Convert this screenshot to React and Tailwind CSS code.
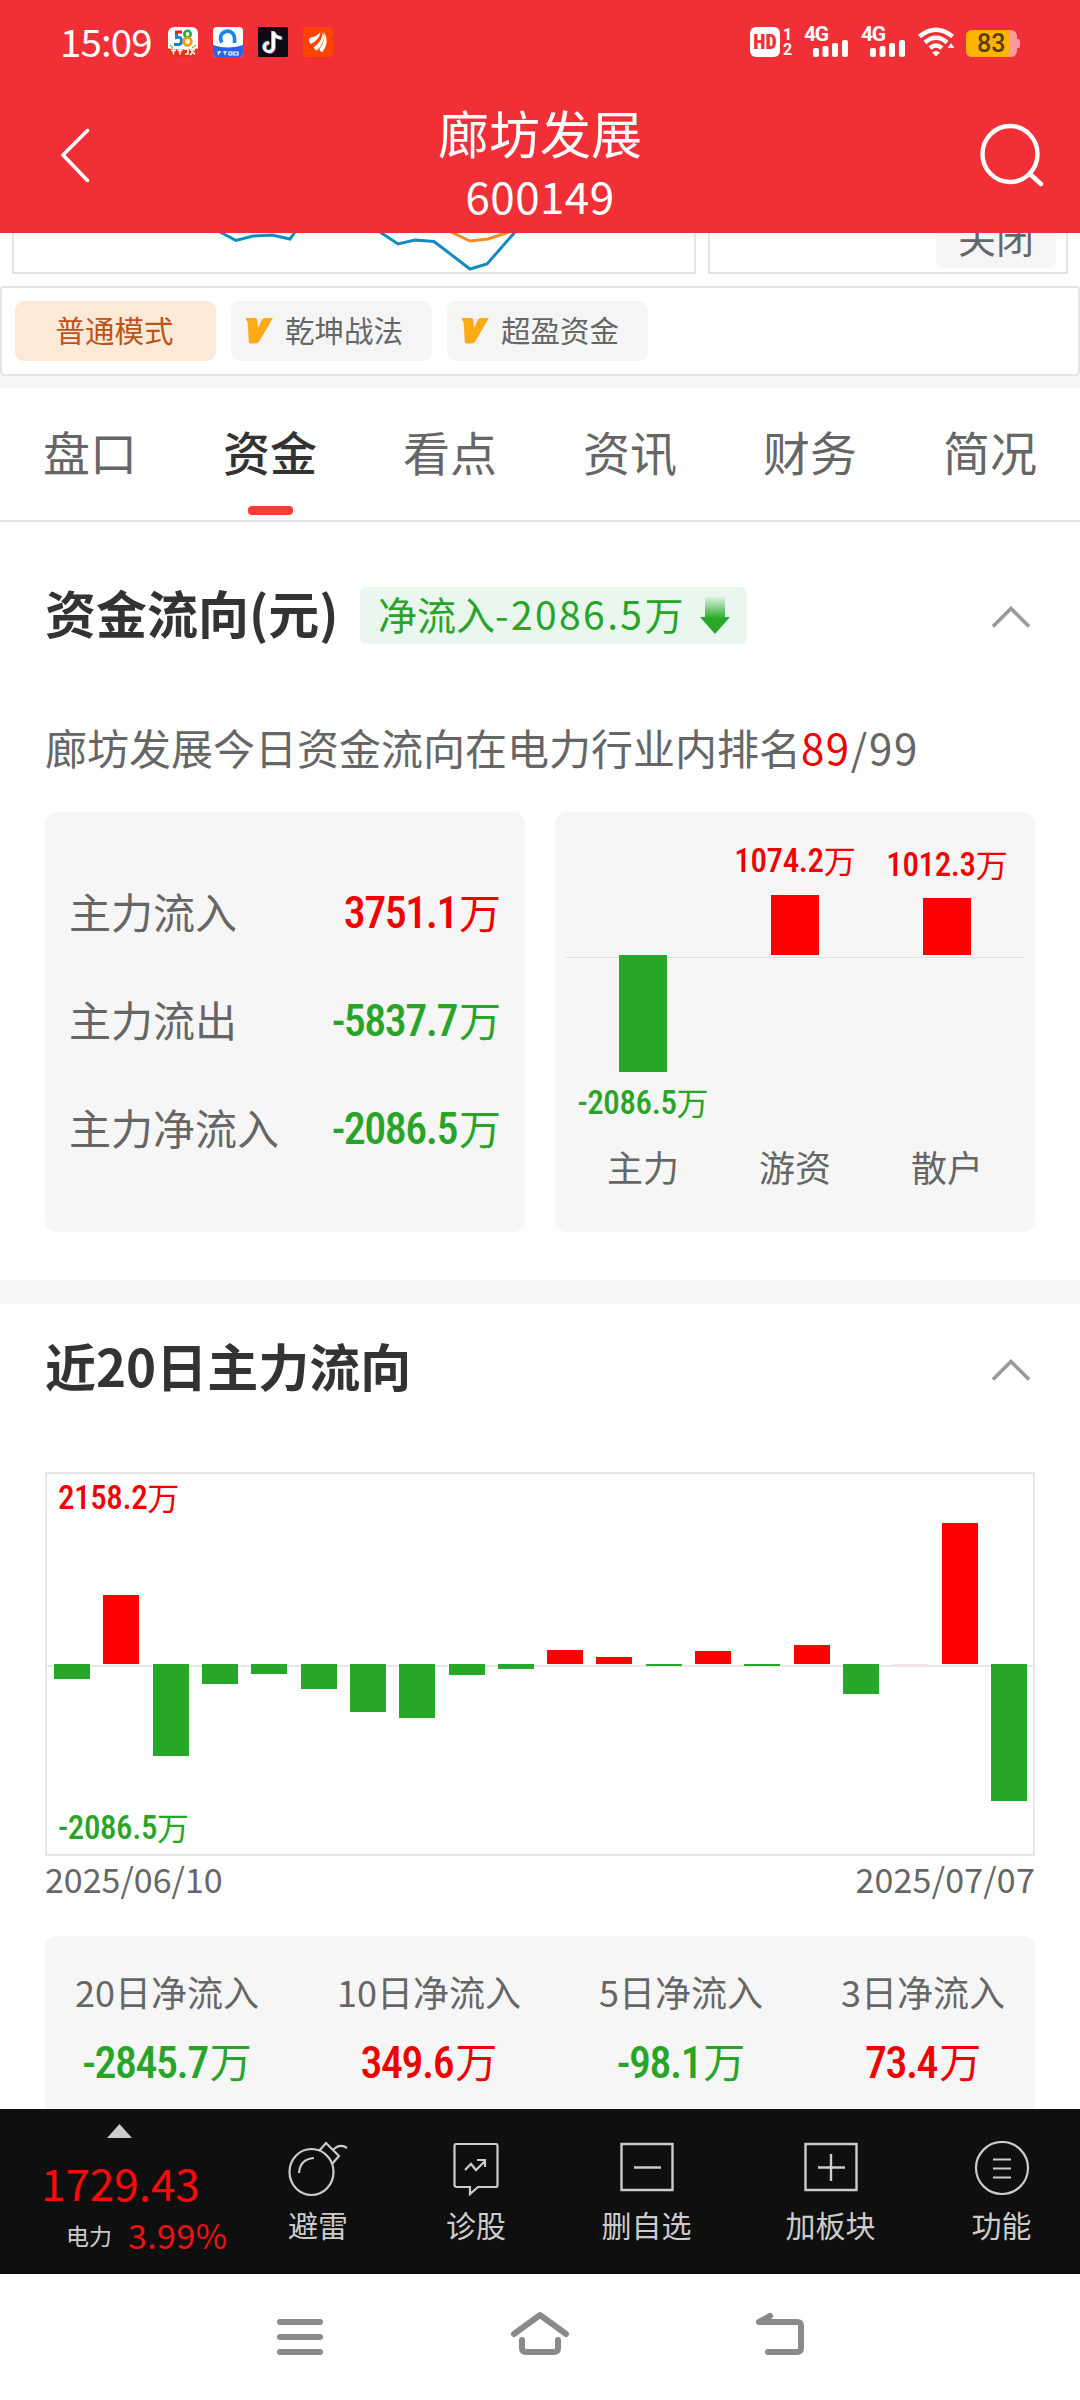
import React from 'react';

const RED = 'text-[#f00000]';
const GREEN = 'text-[#28a428]';

const tabs = ['盘口', '资金', '看点', '资讯', '财务', '简况'];

const flowRows = [
  { label: '主力流入', value: '3751.1', color: RED },
  { label: '主力流出', value: '-5837.7', color: GREEN },
  { label: '主力净流入', value: '-2086.5', color: GREEN }
];

// signed bar heights in px, oldest first
const dailyBars = [
  -14.5, 69.5, -92, -19.5, -10, -25, -47.5, -53.5, -11, -5,
  14, 7, -1.5, 13, -1.5, 19, -30, 0.5, 141.5, -136.5
];

const summary = [
  { label: '20日净流入', value: '-2845.7', color: GREEN },
  { label: '10日净流入', value: '349.6', color: RED },
  { label: '5日净流入', value: '-98.1', color: GREEN },
  { label: '3日净流入', value: '73.4', color: RED }
];

const Amount = ({ value, large, className }) => (
  <span className={`inline-flex items-center whitespace-nowrap ${className}`}>
    <span
      className={`font-['Roboto_Condensed',Roboto,sans-serif] font-medium [font-stretch:75%] ${
        large ? 'text-[44px] tracking-[-1.5px]' : 'text-[33px] tracking-[-0.4px]'
      }`}
    >
      {value}
    </span>
    <span className={large ? 'pb-[5px] pl-[2px]' : 'pb-[4px]'}>万</span>
  </span>
);

const Chevron = () => (
  <svg width="40" height="22" viewBox="0 0 40 22" fill="none" stroke="#999" strokeWidth="3.6">
    <path d="M2 20.500 20 2.500 38 20.500" />
  </svg>
);

const VipMark = () => (
  <svg width="27" height="26" viewBox="0 0 27 26" fill="#ffab17">
    <path d="M0 0h9q2 0 2.200 2l.8 8 4-8.500Q17 0 19 0h8L13.500 23q-1.500 2.500-4 2.500H5q-2 0-2.200-2L1.800 6Q1.700 3 0 2z" />
  </svg>
);

const Signal = () => (
  <div className="relative h-[30px] w-11">
    <span className="absolute left-0 top-[-4px] text-[21px] leading-[22px] font-bold tracking-[-1.200px] font-['Roboto',sans-serif]">4G</span>
    <svg className="absolute bottom-0 left-[9px]" width="35" height="17" viewBox="0 0 35 17" fill="#fff">
      <rect x="0" y="8" width="6" height="9" rx="2" />
      <rect x="9.500" y="6" width="6" height="11" rx="2" />
      <rect x="19" y="3" width="6" height="14" rx="2" />
      <rect x="29" y="0" width="6" height="17" rx="2" />
    </svg>
  </div>
);

const StatusBar = () => (
  <div className="flex h-[84px] items-center pl-[60px] pr-[60px]">
    <span className="w-[93px] whitespace-nowrap pb-[3px] text-[38.500px] leading-none tracking-[-0.900px]">15:09</span>
    <div className="ml-[15px] flex gap-[15px]">
      <svg width="30" height="30" viewBox="0 0 30 30">
        <rect width="30" height="30" rx="6" fill="#fff" />
        <path d="M0 21.500q15 2 30 0V24q0 6-6 6H6q-6 0-6-6z" fill="#e2331a" />
        <path d="M2 18l3 3M28 18l-4 3" stroke="#8cc63f" strokeWidth="1.500" />
        <path d="M8.500 6v4.500q5-1 5 3t-3 4H6" fill="none" stroke="#1b7fd0" strokeWidth="3" />
        <path d="M14 5H7" stroke="#e2231a" strokeWidth="3" />
        <circle cx="19.500" cy="7" r="3.200" fill="none" stroke="#1faf3c" strokeWidth="2.600" />
        <circle cx="19.500" cy="14.500" r="3.800" fill="none" stroke="#f39a1b" strokeWidth="2.800" />
        <path d="M3 23.500h5M5.500 21.500v6M9.500 23.500h5M12 21.500v6M16 22h4v5h-3M22 23h5M24 22v4l-2 2M25 25l2 2.500" fill="none" stroke="#fff" strokeWidth="1.500" />
      </svg>
      <svg width="30" height="30" viewBox="0 0 30 30">
        <rect width="30" height="30" rx="4" fill="#fff" />
        <path d="M0 18q15 5 30 0v8q0 4-4 4H4q-4 0-4-4z" fill="#2b62e8" />
        <path d="M9 15.500A7 7 0 1 1 21.500 10.500v5.500" fill="none" stroke="#1c84ee" strokeWidth="3.600" />
        <path d="M4 25h4M7 24l-2 4M10 25h4M12 24v4M16 25h3v3h-3zM21 25h4v3h-4z" stroke="#fff" strokeWidth="1.200" fill="none" />
      </svg>
      <svg width="30" height="30" viewBox="0 0 30 30" fill="none">
        <rect width="30" height="30" rx="1.500" fill="#0b0b16" />
        <path d="M14.500 4v16a4.500 4.500 0 1 1-4.500-4.800M14.500 5q1.500 5 8 5.500" stroke="#25e6e2" strokeWidth="3" />
        <path d="M16.500 5v16a4.500 4.500 0 1 1-4.500-4.800M16.500 6q1.500 5 8 5.500" stroke="#f4355a" strokeWidth="3" />
        <path d="M15.500 4.500v16a4.500 4.500 0 1 1-4.500-4.800M15.500 5.500q1.500 5 8 5.500" stroke="#fff" strokeWidth="3" />
      </svg>
      <svg width="30" height="30" viewBox="0 0 30 30" fill="#fff">
        <rect width="30" height="30" rx="3" fill="#ff4400" />
        <path d="M6 13q0-2 2-2.500 6-1 9.500-5.500-1 8-10 12-1.500-1.500-1.500-4z" />
        <path d="M10.500 20.500q8.500-6 9.500-15.500 3.500 9-6 18.500-2.500-.5-3.500-3z" />
        <path d="M16.500 22q6-7.500 4.500-17 6 10-1.500 20-2.500 0-3-3z" />
      </svg>
    </div>

    <div className="ml-auto flex h-[30px] items-end text-white">
      <div className="flex h-[30px] w-[30px] items-center justify-center rounded-[6px] bg-white text-[20px] font-black text-[#f12f37] font-['Roboto_Condensed',Roboto,sans-serif] [font-stretch:75%]">HD</div>
      <div className="ml-[3px] flex h-[30px] w-[9px] flex-col items-center justify-between text-[16px] leading-[15px] font-bold font-['Roboto',sans-serif]">
        <span>1</span>
        <span>2</span>
      </div>
      <div className="ml-[12px]"><Signal /></div>
      <div className="ml-[13px]"><Signal /></div>
      <svg className="ml-[13px]" width="37" height="30" viewBox="0 0 37 30" fill="none" stroke="#fff" strokeWidth="4.400">
        <path d="M1.500 9.500Q18 -4 34.500 9.500" />
        <path d="M7 15.500Q18 6 29 15.500" />
        <path d="M12 21Q18 16 24 21" />
        <path d="M14 25.500q4-3 8 0L18 29.500z" fill="#fff" stroke="none" />
        <path d="M33 16l3.500 5h-7z" fill="#fff" stroke="none" />
      </svg>
      <div className="relative ml-[11px] flex h-[27px] w-[54px] items-center">
        <div className="flex h-[27px] w-[51px] overflow-hidden rounded-[6px] bg-[#fb9aa0]">
          <div className="h-full w-[43px] bg-[#ffb400]" />
        </div>
        <div className="h-[9px] w-[3px] rounded-r-[2px] bg-[#fb9aa0]" />
        <span className="absolute left-[11px] top-0 text-[25px] leading-[28px] font-medium text-[#5a3c00] font-['Roboto',sans-serif]">83</span>
      </div>
    </div>
  </div>
);

const Header = () => (
  <div className="h-[233px] shrink-0 bg-[#f12f37] text-white">
    <StatusBar />
    <div className="flex h-[149px] items-start justify-between pl-[60px] pr-[36px]">
      <svg className="mt-[44px]" width="30" height="54" viewBox="0 0 30 54" fill="none" stroke="#fff" strokeWidth="3.600" strokeLinecap="round" strokeLinejoin="round">
        <path d="M27.500 2.500 3 27l24.500 25.500" />
      </svg>
      <div className="ml-[10px] mt-[18px] flex flex-col items-center">
        <div className="text-[51px] leading-[60px]">廊坊发展</div>
        <div className="mt-[3px] text-[44px] leading-[60px] tracking-[0.400px]">600149</div>
      </div>
      <svg className="mt-[39px]" width="64" height="64" viewBox="0 0 64 64" fill="none" stroke="#fff" strokeWidth="4.400" strokeLinecap="round">
        <ellipse cx="30" cy="31" rx="27.500" ry="28" />
        <path d="m50 51 11 10" />
      </svg>
    </div>
  </div>
);

const ChartStrip = () => (
  <div className="flex h-[53px] items-start gap-[12px] px-[12px]">
    <div className="h-[41px] w-[684px] border-x-2 border-b-2 border-[#e4e4e4]">
      <svg width="680" height="39" viewBox="14 233 680 39" fill="none" strokeWidth="3">
        <path d="M220 232l16 8.500 17-4.500 19-1 18 4 5-7M380 232l18 12 17-4 19 1.500 36 27.500 17-5 28-32" stroke="#148ac0" />
        <path d="M451 232l19 9 18-2 21-7" stroke="#f58a1f" />
      </svg>
    </div>
    <div className="flex h-[41px] w-[360px] justify-end overflow-hidden border-x-2 border-b-2 border-[#e4e4e4] pr-[10px]">
      <div className="h-[35px] w-[120px] overflow-hidden rounded-b-[8px] bg-[#f5f5f5] text-center text-[#666]">
        <div className="mt-[-22px] text-[38px] leading-[52px]">关闭</div>
      </div>
    </div>
  </div>
);

const ModeBar = () => (
  <div className="flex h-[90px] items-center gap-[15px] rounded-[4px] border-2 border-[#e4e4e4] px-[13px] text-[29.500px] text-[#666]">
    <div className="flex h-[60px] w-[201px] items-center justify-center rounded-[9px] bg-[#fce9d8] pr-[2px] pb-[3px] text-[#bd5318]">普通模式</div>
    {['乾坤战法', '超盈资金'].map((name) => (
      <div key={name} className="flex h-[60px] w-[201px] items-center gap-[12px] rounded-[9px] bg-[#f5f5f5] pl-[15px]">
        <VipMark />
        <span className="whitespace-nowrap pb-[3px]">{name}</span>
      </div>
    ))}
  </div>
);

const Tabs = () => (
  <div className="grid h-[134px] grid-cols-6 border-b-2 border-[#e4e4e4] text-[47px] text-[#666]">
    {tabs.map((tab) => (
      <div key={tab} className="flex flex-col items-center pt-[28px]">
        <span className={tab === '资金' ? 'leading-[70px] font-medium text-[#333]' : 'leading-[70px]'}>{tab}</span>
        {tab === '资金' && <span className="mt-[20px] h-[9px] w-[45px] rounded-[4px] bg-[#fb3b34]" />}
      </div>
    ))}
  </div>
);

const GroupBar = ({ label, amount, color, fill, up, height, offset }) => (
  <div className="flex w-[152px] flex-col items-center">
    <div className={`flex h-[143px] flex-col items-center justify-end ${color}`}>
      {up && <Amount value={amount} className={`text-[32px] leading-[40px] ${offset}`} />}
      {up && <div className={`w-[48px] ${fill}`} style={{ height }} />}
    </div>
    <div className={`flex h-[183px] flex-col items-center ${color}`}>
      {!up && <div className={`w-[48px] ${fill}`} style={{ height }} />}
      {!up && <Amount value={amount} className={`text-[32px] leading-[40px] ${offset}`} />}
    </div>
    <div className="text-[36px] leading-[56px] text-[#666]">{label}</div>
  </div>
);

const CapitalFlow = () => (
  <div className="h-[758px] px-[45px]">
    <div className="flex h-[186px] items-center">
      <h2 className="whitespace-nowrap pb-[6px] text-[51px] leading-[60px] font-bold text-[#333]">资金流向(元)</h2>
      <div className="ml-auto flex h-[57px] w-[387px] items-center justify-between rounded-[6px] bg-[#e9f7ee] pl-[18px] pr-[17px] text-[#28a428]">
        <span className="whitespace-nowrap pb-[5px] text-[39px] leading-[52px]">
          净流入<span className="tracking-[2.400px]">-2086.5</span>万
        </span>
        <svg width="30" height="38" viewBox="0 0 30 38">
          <defs>
            <linearGradient id="drop" x1="0" y1="0" x2="0" y2="1">
              <stop offset="0" stopColor="#28a828" stopOpacity="0" />
              <stop offset="0.600" stopColor="#28a828" />
            </linearGradient>
          </defs>
          <path d="M5 0h20v21h5L15 38 0 21h5z" fill="url(#drop)" />
        </svg>
      </div>
      <div className="mr-[4px] ml-[244px] mt-[3px]"><Chevron /></div>
    </div>

    <p className="mt-[8px] h-[96px] whitespace-nowrap text-[42px] leading-[62px] text-[#666]">
      廊坊发展今日资金流向在电力行业内排名<span className={`tracking-[1.500px] ${RED}`}>89</span>
      <span className="tracking-[1.800px]">/99</span>
    </p>

    <div className="flex gap-[30px]">
      <div className="flex h-[420px] w-[480px] flex-col justify-center rounded-[12px] bg-[#f6f6f6] px-[24px] pb-[2px]">
        {flowRows.map((row) => (
          <div key={row.label} className="flex h-[108px] items-center justify-between text-[42px]">
            <span className="pb-[5px] text-[#666]">{row.label}</span>
            <Amount large value={row.value} className={row.color} />
          </div>
        ))}
      </div>
      <div className="relative flex h-[420px] w-[480px] justify-center rounded-[12px] bg-[#f6f6f6]">
        <div className="absolute left-[11px] right-[11px] top-[145px] h-px bg-[#e0e0e0]" />
        <div className="relative flex">
          <GroupBar label="主力" amount="-2086.5" color={GREEN} fill="bg-[#28a828]" height={117} offset="mt-[9px]" />
          <GroupBar label="游资" amount="1074.2" color={RED} fill="bg-[#ff0000]" up height={60} offset="mb-[12px]" />
          <GroupBar label="散户" amount="1012.3" color={RED} fill="bg-[#ff0000]" up height={57} offset="mb-[11px]" />
        </div>
      </div>
    </div>
  </div>
);

const barFill = (h) => {
  if (h < 0) return 'bg-[#28a828]';
  return h < 1 ? 'bg-[#fbe6e6]' : 'bg-[#ff0000]';
};

const DailyChart = () => (
  <div className="relative h-[384px] border-2 border-[#e8e8e8]">
    <div className="absolute left-0 right-0 top-[191px] h-[2px] bg-[#e8e8e8]" />
    <div className="relative flex justify-between pl-[7px] pr-[6px]">
      {dailyBars.map((h, i) => (
        <div key={i} className="flex h-[380px] w-[36px] flex-col">
          <div className="flex h-[190px] items-end">
            {h > 0 && <div className={`w-full ${barFill(h)}`} style={{ height: h }} />}
          </div>
          {h < 0 && <div className={`w-full ${barFill(h)}`} style={{ height: -h }} />}
        </div>
      ))}
    </div>
    <Amount value="2158.2" className="absolute left-[11px] top-[2px] text-[32px] leading-[40px] text-[#f00000]" />
    <Amount value="-2086.5" className="absolute bottom-[4px] left-[11px] text-[32px] leading-[40px] text-[#28a428]" />
  </div>
);

const RecentFlow = () => (
  <div className="h-[805px] overflow-hidden px-[45px]">
    <div className="flex h-[168px] items-start justify-between pt-[31px]">
      <h2 className="text-[51px] leading-[60px] font-bold text-[#333]">近20日主力流向</h2>
      <div className="mr-[4px] mt-[24px]"><Chevron /></div>
    </div>
    <DailyChart />
    <div className="mt-[-2px] flex h-[82px] justify-between text-[34px] leading-[50px] text-[#666]">
      <span>2025/06/10</span>
      <span className="tracking-[0.200px]">2025/07/07</span>
    </div>
    <div className="flex h-[200px] justify-between rounded-t-[12px] bg-[#f6f6f6] px-[30px] pt-[29px]">
      {summary.map((item) => (
        <div key={item.label} className="flex flex-col items-center">
          <span className="text-[36px] leading-[52px] text-[#666]">{item.label}</span>
          <Amount large value={item.value} className={`mt-[13px] text-[42px] leading-[60px] ${item.color}`} />
        </div>
      ))}
    </div>
  </div>
);

const actions = [
  {
    name: '避雷',
    width: 'w-[158px]',
    icon: (
      <svg width="60" height="56" viewBox="0 0 60 56" fill="none" stroke="#ccc" strokeWidth="2.200">
        <ellipse cx="23.500" cy="31" rx="22" ry="23" />
        <path d="M11 32q1-14 15-15" />
        <path d="m31 10 7-8 13 13-7 8M45 9q7-7 14-2" />
      </svg>
    )
  },
  {
    name: '诊股',
    width: 'w-[158px]',
    icon: (
      <svg width="46" height="56" viewBox="0 0 46 56" fill="none" stroke="#ccc" strokeWidth="2.200">
        <path d="M3 3h40q1.500 0 1.500 2v39q0 2-2 2H25l-8 7v-7H4q-2.500 0-2.500-2V5q0-2 1.500-2z" />
        <path d="m12 29 6-6 5 6 9-9M24 19h8v7" />
      </svg>
    )
  },
  {
    name: '删自选',
    width: 'w-[183px]',
    icon: (
      <svg width="54" height="56" viewBox="0 0 54 56" fill="none" stroke="#ccc" strokeWidth="2.400">
        <path d="M1.500 3h51v46h-51zM14 26.500h27" />
      </svg>
    )
  },
  {
    name: '加板块',
    width: 'w-[185px]',
    icon: (
      <svg width="54" height="56" viewBox="0 0 54 56" fill="none" stroke="#ccc" strokeWidth="2.400">
        <path d="M1.500 3h51v46h-51zM14 26.500h27M27 13v27" />
      </svg>
    )
  },
  {
    name: '功能',
    width: 'w-[157px]',
    icon: (
      <svg width="56" height="56" viewBox="0 0 56 56" fill="none" stroke="#ccc" strokeWidth="2.200">
        <circle cx="28" cy="27" r="26" />
        <path d="M19 18.500h18M19 27.500h18M19 36.500h18" />
      </svg>
    )
  }
];

const BottomBar = () => (
  <div className="flex h-[165px] shrink-0 bg-[#0f0f0f] text-[#ccc]">
    <div className="w-[239px]">
      <svg className="ml-[107px] mt-[15px]" width="25" height="14" viewBox="0 0 25 14" fill="#ccc">
        <path d="M12.500 0 25 14H0z" />
      </svg>
      <div className="ml-[41px] mt-[15px] text-[44px] leading-[58px] text-[#ff0808]">1729.43</div>
      <div className="ml-[66px] mt-[-1px] flex items-center gap-[16px] leading-[50px]">
        <span className="text-[23px]">电力</span>
        <span className="text-[34px] tracking-[0.400px] text-[#f01010]">3.99%</span>
      </div>
    </div>
    {actions.map((action) => (
      <div key={action.name} className={`flex flex-col items-center pt-[32px] ${action.width}`}>
        {action.icon}
        <span className="mt-[5px] text-[30px] leading-[44px]">{action.name}</span>
      </div>
    ))}
  </div>
);

const SystemNav = () => (
  <div className="flex h-[126px] shrink-0 items-start justify-center bg-white pt-[36px]">
    <svg width="60" height="48" viewBox="270 2310 60 48" stroke="#8a8a8a" strokeWidth="6" strokeLinecap="round">
      <path d="M280 2322h40M280 2337h40M280 2352h40" />
    </svg>
    <svg className="ml-[180px]" width="60" height="48" viewBox="510 2310 60 48" fill="none" stroke="#8a8a8a" strokeWidth="6" strokeLinecap="round" strokeLinejoin="round">
      <path d="m514 2334 26-19 26 19M522 2340v8q0 4 4 4h28q4 0 4-4v-8" />
    </svg>
    <svg className="ml-[180px]" width="60" height="48" viewBox="750 2310 60 48" fill="none" stroke="#8a8a8a" strokeWidth="6" strokeLinecap="round" strokeLinejoin="round">
      <path d="m770 2316-11 6h38q4 0 4 4v22q0 4-4 4h-29" />
    </svg>
  </div>
);

const App = () => {
  return (
    <div className="flex h-[2400px] w-[1080px] flex-col overflow-hidden bg-white font-['Noto_Sans_CJK_SC',sans-serif]">
      <Header />
      <ChartStrip />
      <ModeBar />
      <div className="h-[12px] shrink-0 bg-[#f5f5f5]" />
      <Tabs />
      <CapitalFlow />
      <div className="h-[24px] shrink-0 bg-[#f5f5f5]" />
      <RecentFlow />
      <BottomBar />
      <SystemNav />
    </div>
  );
};

export default App;
